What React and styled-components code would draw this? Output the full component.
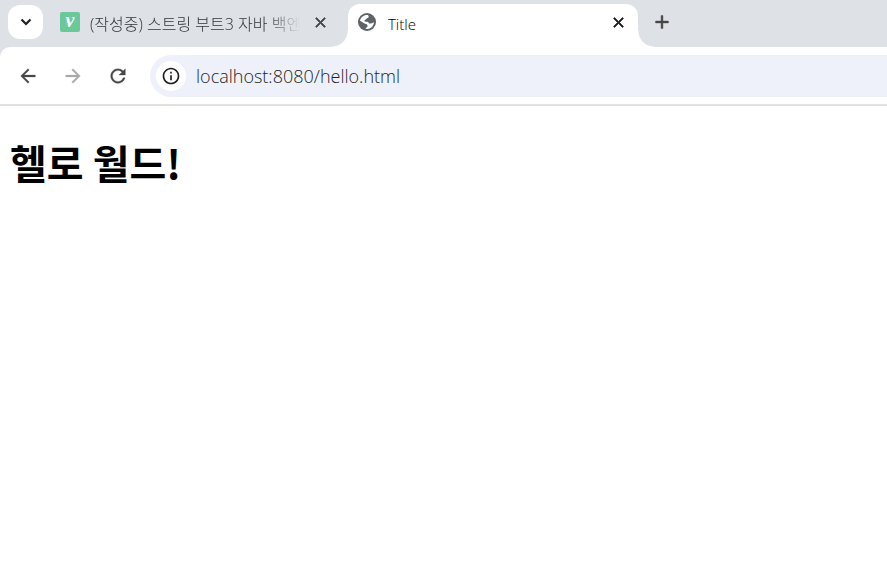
import React from "react";
import styled, { createGlobalStyle } from "styled-components";
import {
  MdArrowBack,
  MdArrowForward,
  MdRefresh,
  MdInfoOutline,
  MdClose,
  MdAdd,
} from "react-icons/md";

function App() {
  return (
    <>
      <GlobalStyle />
      <TabStrip>
        <SearchTabs type="button" aria-label="Search tabs">
          <svg width="12" height="8" viewBox="0 0 12 8">
            <path d="M1.500 1.500 6 6l4.500-4.500" fill="none" stroke="#1f1f1f" strokeWidth="2.200" />
          </svg>
        </SearchTabs>
        <Tab>
          <VelogIcon>v</VelogIcon>
          <TabTitle $fade>(작성중) 스트링 부트3 자바 백엔</TabTitle>
          <CloseButton type="button" aria-label="Close tab">
            <MdClose />
          </CloseButton>
        </Tab>
        <Tab $active>
          <Globe />
          <TabTitle>Title</TabTitle>
          <CloseButton type="button" aria-label="Close tab" $active>
            <MdClose />
          </CloseButton>
        </Tab>
        <NewTab type="button" aria-label="New tab">
          <MdAdd />
        </NewTab>
      </TabStrip>
      <Toolbar>
        <NavButton type="button" aria-label="Back">
          <MdArrowBack />
        </NavButton>
        <NavButton type="button" aria-label="Forward" disabled>
          <MdArrowForward />
        </NavButton>
        <NavButton type="button" aria-label="Reload">
          <MdRefresh />
        </NavButton>
        <AddressBar>
          <SiteInfo type="button" aria-label="View site information">
            <MdInfoOutline />
          </SiteInfo>
          <AddressInput aria-label="Address" defaultValue="localhost:8080/hello.html" spellCheck={false} />
        </AddressBar>
      </Toolbar>
      <Page>
        <h1>헬로 월드!</h1>
      </Page>
    </>
  );
}

function Globe() {
  return (
    <GlobeSvg viewBox="0 0 20 20">
      <circle cx="10" cy="10" r="10" fill="#5f6368" />
      <path
        d="M10.500 2.200c1.200.4 1.500 1.200 1.300 2.200-.3 1.400-2.300 1-2.800 2.200-.3 1-1.600.8-1.800 1.700-.2.900.6 1.300 1.600 1.300 2.200 0 3.400.6 3.400 2h2.100c1.600 0 2.200-1 3.500-1.300-.3 4-3.500 7.300-7.600 7.500-.9 0-1.600-.2-2.100-.5.6-1.200 2.600-1.300 2.600-2.900 0-1.700-1.500-2.100-3-2.400L2.200 8.600C3 4.800 6.300 2 10.500 2.200z"
        fill="#fff"
      />
    </GlobeSvg>
  );
}

const GlobalStyle = createGlobalStyle`
  * {
    box-sizing: border-box;
  }
  body {
    margin: 0;
    background: #fff;
    font-family: "Noto Sans CJK KR", sans-serif;
  }
  button {
    display: flex;
    align-items: center;
    justify-content: center;
    flex: none;
    padding: 0;
    border: 0;
    background: none;
    color: #474747;
  }
`;

const TabStrip = styled.div`
  display: flex;
  align-items: flex-start;
  height: 56px;
  padding: 4px 8px 0;
  background: #dee1e6;
`;

const SearchTabs = styled.button`
  width: 35px;
  height: 34px;
  margin-top: 1px;
  border-radius: 12px;
  && {
    background: #fff;
  }
`;

const Tab = styled.div`
  position: relative;
  display: flex;
  align-items: center;
  flex: 0 1 ${({ $active }) => ($active ? 290 : 305)}px;
  min-width: 0;
  height: 43px;
  padding: ${({ $active }) => ($active ? "0 10px 7px" : "0 18px 7px 17px")};
  border-radius: 12px 12px 0 0;
  background: ${({ $active }) => ($active ? "#fff" : "transparent")};
  color: ${({ $active }) => ($active ? "#000" : "#333")};

  /* flared feet of the selected tab */
  &::before,
  &::after {
    content: ${({ $active }) => ($active ? '""' : "none")};
    position: absolute;
    bottom: 0;
    width: 16px;
    height: 16px;
  }
  &::before {
    right: 100%;
    background: radial-gradient(circle at 0 0, transparent 15px, #fff 16px);
  }
  &::after {
    left: 100%;
    background: radial-gradient(circle at 100% 0, transparent 15px, #fff 16px);
  }
`;

const VelogIcon = styled.span`
  display: flex;
  align-items: center;
  justify-content: center;
  flex: none;
  width: 20px;
  height: 20px;
  padding-bottom: 4px;
  border-radius: 2px;
  background: #6bc89b;
  color: #fff;
  font: italic bold 20px/16px "Liberation Serif", serif;
`;

const GlobeSvg = styled.svg`
  flex: none;
  width: 18px;
  height: 18px;
`;

const TabTitle = styled.span`
  flex: 1;
  min-width: 0;
  margin: ${({ $fade }) => ($fade ? "4px 10px 0" : "4px 10px 0 12px")};
  overflow: hidden;
  white-space: nowrap;
  font-family: "Open Sans", "Noto Sans CJK KR", sans-serif;
  font-size: ${({ $fade }) => ($fade ? 16 : 15)}px;
  font-weight: 300;
  line-height: 22px;
  mask-image: ${({ $fade }) => ($fade ? "linear-gradient(to left, transparent, #000 32px)" : "none")};
`;

const CloseButton = styled.button`
  width: 20px;
  height: 20px;
  font-size: 17px;
  && {
    color: ${({ $active }) => ($active ? "#1f1f1f" : "#474747")};
  }
  path:not([fill="none"]) {
    stroke-width: 1px;
  }
`;

const NewTab = styled.button`
  width: 34px;
  height: 34px;
  margin: 1px 0 0 7px;
  font-size: 22px;
  path:not([fill="none"]) {
    stroke-width: 0.5px;
  }
`;

const Toolbar = styled.div`
  display: flex;
  align-items: center;
  gap: 10px;
  height: 59px;
  margin-top: -9px;
  padding-left: 10px;
  border-bottom: 2px solid #e1e1e1;
  border-radius: 10px 0 0 0;
  background: #fff;
`;

const NavButton = styled.button`
  width: 35px;
  height: 35px;
  font-size: 22px;
  path:not([fill="none"]) {
    stroke-width: 0.3px;
  }
  &:disabled {
    color: #a9a9a9;
  }
`;

const AddressBar = styled.div`
  display: flex;
  align-items: center;
  flex: 1;
  min-width: 0;
  height: 42px;
  margin-left: 5px;
  padding-left: 6px;
  border-radius: 21px 0 0 21px;
  background: #eef1fa;
`;

const SiteInfo = styled.button`
  width: 30px;
  height: 30px;
  border-radius: 50%;
  font-size: 20px;
  && {
    background: #fff;
    color: #1f1f1f;
  }
`;

const AddressInput = styled.input`
  flex: 1;
  min-width: 0;
  margin-left: 10px;
  padding: 0;
  border: 0;
  outline: 0;
  background: none;
  color: #1f1f1f;
  font: 300 18px/24px "Open Sans", sans-serif;
`;

const Page = styled.main`
  padding: 0 10px;
  h1 {
    margin: 27px 0;
    font-size: 40px;
    font-weight: 700;
  }
`;

export default App;
